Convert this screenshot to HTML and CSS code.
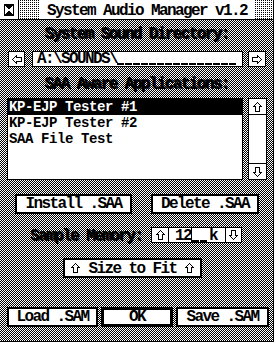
FILE: index.html
```html
<!DOCTYPE html>
<html lang="en">
<head>
    <meta charset="UTF-8">
    <title>System Audio Manager</title>
    <link rel="stylesheet" href="styles.css">
</head>
<body>
    <div class="window">
        <div class="titlebar">
            <div class="closebox">
                <svg width="10" height="12" viewBox="0 0 10 12" shape-rendering="crispEdges">
                    <rect x="0.5" y="0.5" width="9" height="11" fill="#fff" stroke="#000"/>
                    <polygon points="1,1 9,1 5,6" fill="#000"/>
                    <polygon points="1,11 9,11 5,6" fill="#000"/>
                </svg>
            </div>
            <div class="dots dots-left"></div>
            <div class="title">System Audio Manager v1.2</div>
            <div class="dots"></div>
        </div>

        <div class="dialog">
            <div class="heading h-dir">System Sound Directory:</div>

            <!-- PATH FIELD -->
            <div class="path-row">
                <div class="arrow-box ab-left">
                    <svg width="10" height="9" viewBox="0 0 10 9" shape-rendering="crispEdges"><polygon points="0.5,4.5 4.5,0.5 4.5,2.5 9.5,2.5 9.5,6.5 4.5,6.5 4.5,8.5" fill="#fff" stroke="#000"/></svg>
                </div>
                <div class="field path-field">A:\SOUNDS\<span class="blanks path-blanks"></span></div>
                <div class="arrow-box ab-right">
                    <svg width="10" height="9" viewBox="0 0 10 9" shape-rendering="crispEdges"><polygon points="9.5,4.5 5.5,0.5 5.5,2.5 0.5,2.5 0.5,6.5 5.5,6.5 5.5,8.5" fill="#fff" stroke="#000"/></svg>
                </div>
            </div>

            <div class="heading h-apps">SAA Aware Applications:</div>

            <!-- APPLICATION LIST -->
            <div class="list-row">
                <div class="list">
                    <div class="item selected">KP-EJP Tester #1</div>
                    <div class="item">KP-EJP Tester #2</div>
                    <div class="item">SAA File Test</div>
                </div>
                <div class="scrollbar">
                    <div class="scroll-btn up">
                        <svg width="9" height="10" viewBox="0 0 9 10" shape-rendering="crispEdges"><polygon points="4.5,0.5 8.5,4.5 6.5,4.5 6.5,9.5 2.5,9.5 2.5,4.5 0.5,4.5" fill="#fff" stroke="#000"/></svg>
                    </div>
                    <div class="scroll-track"></div>
                    <div class="scroll-btn down">
                        <svg width="9" height="10" viewBox="0 0 9 10" shape-rendering="crispEdges"><polygon points="4.5,9.5 8.5,5.5 6.5,5.5 6.5,0.5 2.5,0.5 2.5,5.5 0.5,5.5" fill="#fff" stroke="#000"/></svg>
                    </div>
                </div>
            </div>

            <div class="btn-row saa-row">
                <div class="btn btn-install">Install .SAA</div>
                <div class="btn btn-delete">Delete .SAA</div>
            </div>

            <!-- SAMPLE MEMORY -->
            <div class="memory-row">
                <div class="heading mem-label">Sample Memory:</div>
                <div class="spinner">
                    <div class="spin-btn">
                        <svg width="9" height="10" viewBox="0 0 9 10" shape-rendering="crispEdges"><polygon points="4.5,0.5 8.5,4.5 6.5,4.5 6.5,9.5 2.5,9.5 2.5,4.5 0.5,4.5" fill="#fff" stroke="#000"/></svg>
                    </div>
                    <div class="spin-value">12<span class="cursor"></span><span class="blanks mem-blanks"></span>k</div>
                    <div class="spin-btn spin-down">
                        <svg width="9" height="10" viewBox="0 0 9 10" shape-rendering="crispEdges"><polygon points="4.5,9.5 8.5,5.5 6.5,5.5 6.5,0.5 2.5,0.5 2.5,5.5 0.5,5.5" fill="#fff" stroke="#000"/></svg>
                    </div>
                </div>
            </div>

            <div class="btn btn-fit">
                <svg class="fit-arrow" width="9" height="10" viewBox="0 0 9 10" shape-rendering="crispEdges"><polygon points="4.5,0.5 8.5,4.5 6.5,4.5 6.5,9.5 2.5,9.5 2.5,4.5 0.5,4.5" fill="#fff" stroke="#000"/></svg>
                <span>Size to Fit</span>
                <svg class="fit-arrow" width="9" height="10" viewBox="0 0 9 10" shape-rendering="crispEdges"><polygon points="4.5,0.5 8.5,4.5 6.5,4.5 6.5,9.5 2.5,9.5 2.5,4.5 0.5,4.5" fill="#fff" stroke="#000"/></svg>
            </div>

            <div class="btn-row bottom-row">
                <div class="btn btn-load">Load .SAM</div>
                <div class="btn btn-ok">OK</div>
                <div class="btn btn-save">Save .SAM</div>
            </div>
        </div>
    </div>
</body>
</html>
```

FILE: styles.css
```css
* {
    box-sizing: border-box;
    margin: 0;
    padding: 0;
}

html, body {
    background: #fff;
}

body {
    font-family: "Liberation Mono", "DejaVu Sans Mono", monospace;
    font-weight: bold;
    font-size: 16px;
    letter-spacing: -1.6px;
    color: #000;
    line-height: 16px;
}

.window {
    width: 274px;
    height: 342px;
    border-right: 1px solid #000;
    border-bottom: 1px solid #000;
    display: flex;
    flex-direction: column;
}

/* title bar */
.titlebar {
    height: 20px;
    border-bottom: 1px solid #000;
    display: flex;
    background: #fff;
}

.closebox {
    width: 19px;
    border-right: 1px solid #000;
    display: flex;
    align-items: center;
    justify-content: center;
}

.dots {
    flex: 1;
    background-image: conic-gradient(#000 25%, #fff 0);
    background-size: 2px 2px;
}

.dots-left {
    flex: none;
    width: 21px;
}

.title {
    width: 214px;
    text-align: center;
    padding-top: 3px;
    white-space: nowrap;
}

/* dialog body */
.dialog {
    flex: 1;
    background-image: conic-gradient(#000 25%, #fff 0 50%, #000 0 75%, #fff 0);
    background-size: 2px 2px;
    display: flex;
    flex-direction: column;
}

.heading {
    text-align: center;
    white-space: nowrap;
    text-shadow: 1px 1px 0 #000;
    height: 16px;
}

.h-dir {
    margin-top: 6px;
}

.h-apps {
    margin-top: 9px;
}

.path-row {
    display: flex;
    margin-top: 9px;
    height: 16px;
    padding-left: 8px;
}

.arrow-box {
    background: #fff;
    border: 1px solid #000;
    display: flex;
    align-items: center;
    justify-content: center;
}

.ab-left {
    width: 17px;
}

.ab-right {
    width: 18px;
    margin-left: 5px;
}

.field {
    background: #fff;
    border: 1px solid #000;
    white-space: nowrap;
    overflow: hidden;
}

.path-field {
    width: 211px;
    margin-left: 7px;
    padding-left: 4px;
    line-height: 15px;
}

/* blank slots of an editable field, drawn as 7px dashes */
.blanks {
    display: inline-block;
    height: 2px;
    vertical-align: -2px;
    background: repeating-linear-gradient(to right, #000 0 7px, transparent 7px 8px);
}

.path-blanks {
    width: 120px;
}

.mem-blanks {
    width: 16px;
    margin-right: 1px;
}

/* list */
.list-row {
    display: flex;
    margin-top: 6px;
    padding-left: 7px;
    height: 82px;
}

.list {
    width: 236px;
    background: #fff;
    border: 1px solid #000;
}

.item {
    height: 16px;
    font-size: 14px;
    letter-spacing: -0.4px;
    line-height: 17px;
    padding-left: 1px;
    white-space: nowrap;
}

.item.selected {
    background: #000;
    color: #fff;
}

.scrollbar {
    width: 19px;
    margin-left: 5px;
    background: #fff;
    border: 1px solid #000;
    display: flex;
    flex-direction: column;
}

.scroll-btn {
    height: 16px;
    display: flex;
    align-items: center;
    justify-content: center;
}

.scroll-btn.up {
    border-bottom: 1px solid #000;
}

.scroll-btn.down {
    border-top: 1px solid #000;
}

.scroll-track {
    flex: 1;
}

/* buttons */
.btn-row {
    display: flex;
}

.btn {
    background: #fff;
    border: 2px solid #000;
    height: 20px;
    line-height: 16px;
    text-align: center;
    white-space: nowrap;
}

.saa-row {
    margin-top: 14px;
    padding-left: 15px;
}

.btn-install {
    width: 117px;
}

.btn-delete {
    width: 108px;
    margin-left: 19px;
}

.memory-row {
    display: flex;
    margin-top: 13px;
    height: 16px;
    padding-left: 30px;
}

.mem-label {
    width: 112px;
    text-align: left;
    padding-top: 1px;
}

.spinner {
    display: flex;
    margin-left: 9px;
    background: #fff;
    border: 1px solid #000;
}

.spin-btn {
    width: 17px;
    display: flex;
    align-items: center;
    justify-content: center;
    border-right: 1px solid #000;
}

.spin-down {
    border-right: none;
    border-left: 1px solid #000;
    width: 16px;
}

.spin-value {
    width: 56px;
    padding-left: 6px;
    white-space: nowrap;
}

.cursor {
    display: inline-block;
    width: 1px;
    height: 16px;
    background: #000;
    vertical-align: top;
    margin-top: -1px;
}

.btn-fit {
    margin-top: 15px;
    margin-left: 63px;
    width: 139px;
    display: flex;
    align-items: center;
    justify-content: center;
    gap: 8px;
}

.btn-fit span {
    margin-top: 1px;
}

.bottom-row {
    margin-top: 29px;
    padding-left: 7px;
}

.btn-load {
    width: 91px;
}

.btn-ok {
    width: 72px;
    margin-left: 3px;
    border-width: 3px;
    line-height: 14px;
}

.btn-save {
    width: 93px;
    margin-left: 3px;
}
```
